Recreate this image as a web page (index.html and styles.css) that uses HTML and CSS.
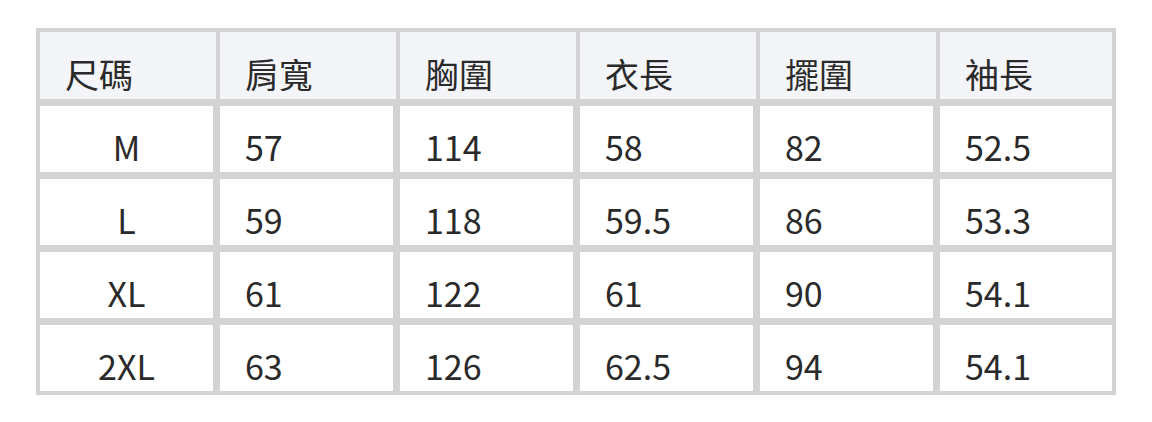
FILE: index.html
```html
<!DOCTYPE html>
<html lang="zh-Hant">
<head>
<meta charset="utf-8">
<title>尺碼表</title>
<link rel="stylesheet" href="styles.css">
</head>
<body>
<table class="size-table">
  <thead>
    <tr><th>尺碼</th><th>肩寬</th><th>胸圍</th><th>衣長</th><th>擺圍</th><th>袖長</th></tr>
  </thead>
  <tbody>
    <tr><td>M</td><td>57</td><td>114</td><td>58</td><td>82</td><td>52.5</td></tr>
    <tr><td>L</td><td>59</td><td>118</td><td>59.5</td><td>86</td><td>53.3</td></tr>
    <tr><td>XL</td><td>61</td><td>122</td><td>61</td><td>90</td><td>54.1</td></tr>
    <tr><td>2XL</td><td>63</td><td>126</td><td>62.5</td><td>94</td><td>54.1</td></tr>
  </tbody>
</table>
</body>
</html>
```
FILE: styles.css
```css
html, body {
  margin: 0;
  padding: 0;
  background: #ffffff;
}
body {
  padding: 28px 0 0 36px;
  font-family: "Noto Sans CJK TC", "Noto Sans CJK SC", "Noto Sans", sans-serif;
  color: #2a2a2a;
}
.size-table {
  width: 1080px;
  table-layout: fixed;
  border-collapse: separate;
  border-spacing: 0;
  border: 4px solid #d3d3d3;
  font-size: 34px;
  line-height: 50px;
}
.size-table th,
.size-table td {
  box-sizing: border-box;
  width: 180px;
  padding: 0 0 0 25px;
  text-align: left;
  vertical-align: bottom;
  font-weight: 400;
  white-space: nowrap;
}
.size-table th:last-child,
.size-table td:last-child {
  width: auto;
  border-right: 0;
}
.size-table th {
  height: 74px;
  background: #f4f5f9;
  border-right: 4px solid #d3d3d3;
  border-bottom: 7px solid #d3d3d3;
}
.size-table td {
  height: 73px;
  background: #ffffff;
  border-right: 7px solid #d3d3d3;
  border-bottom: 7px solid #d3d3d3;
}
.size-table tbody tr:last-child td {
  height: 66px;
  border-bottom: 0;
}
.size-table td:first-child {
  text-align: center;
  padding-left: 0;
}
```
